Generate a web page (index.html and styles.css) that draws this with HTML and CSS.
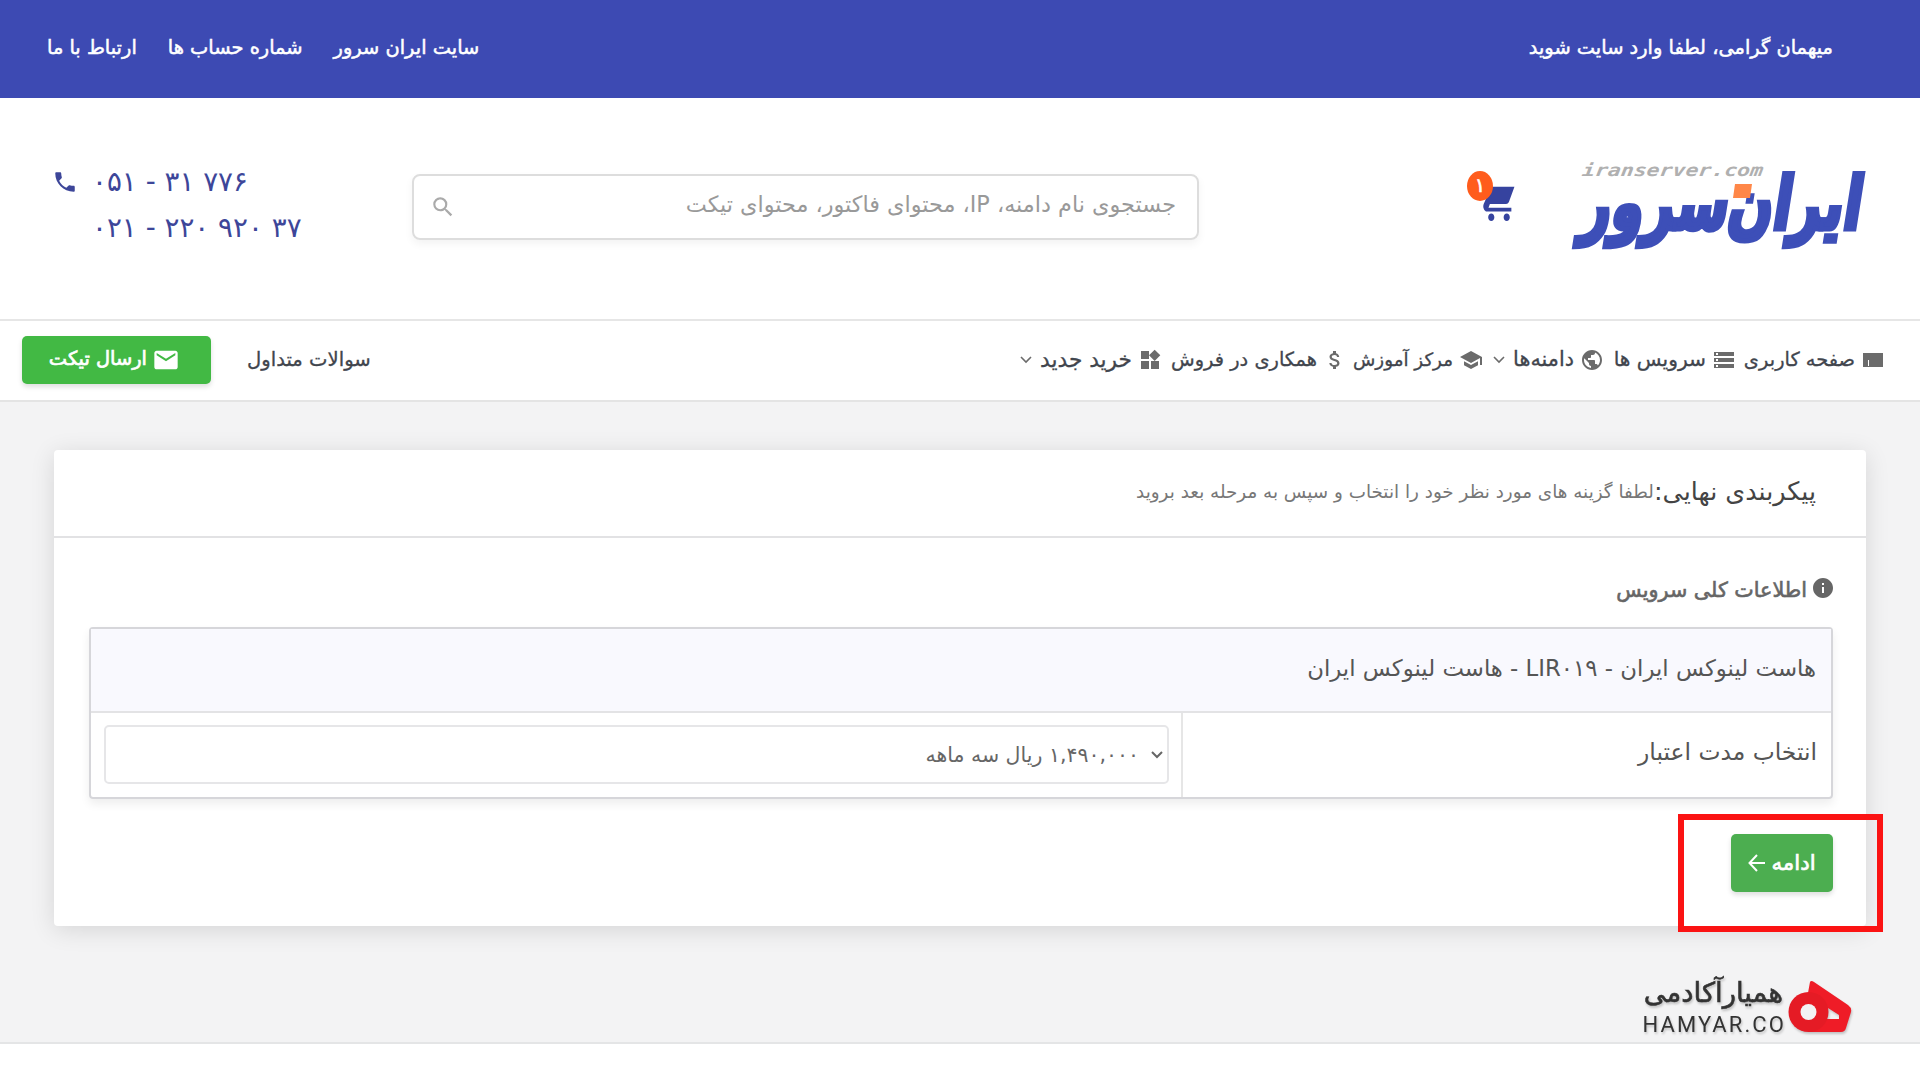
FILE: index.html
```
<!DOCTYPE html>
<html lang="fa" dir="rtl">
<head>
    <meta charset="UTF-8">
    <title>ایران سرور - پیکربندی نهایی</title>
    <link rel="stylesheet" href="styles.css">
</head>
<body>

<div class="topbar">
    <span>میهمان گرامی، لطفا وارد سایت شوید</span>
    <div class="topbar-links">
        <a>سایت ایران سرور</a>
        <a>شماره حساب ها</a>
        <a>ارتباط با ما</a>
    </div>
</div>

<header class="header">
    <svg class="logo" width="310" height="100" viewBox="-5 0 310 100" direction="ltr">
        <text class="logo-domain" x="14" y="18" textLength="181" lengthAdjust="spacingAndGlyphs" transform="skewX(-8)">iranserver.com</text>
        <g transform="translate(9 71) skewX(-9) scale(1 1.3)">
            <text class="logo-name" x="0" y="0" textLength="280" lengthAdjust="spacingAndGlyphs">ایران‌سرور</text>
        </g>
        <path class="logo-dot" d="M165 26h17l-2 14h-17z"/>
    </svg>
    <div class="cart">
        <svg width="34" height="38" viewBox="1 2 22 20" preserveAspectRatio="none"><path d="M17 18c1.100 0 2 .9 2 2s-.9 2-2 2-2-.9-2-2 .9-2 2-2zM7 18c1.100 0 2 .9 2 2s-.9 2-2 2-2-.9-2-2 .9-2 2-2zM22 4H6.200L3.300 10.800 2.100 13c-.8 1.500.2 4 2.200 4H20v-2H5.200l.9-2h10.500c.8 0 1.400-.4 1.800-1z"/></svg>
        <span class="badge">۱</span>
    </div>
    <div class="search">
        <input type="text" placeholder="جستجوی نام دامنه، IP، محتوای فاکتور، محتوای تیکت">
        <svg width="26" height="26" viewBox="0 0 24 24"><path d="M15.500 14h-.79l-.28-.27A6.470 6.470 0 0 0 16 9.500 6.500 6.500 0 1 0 9.500 16c1.610 0 3.090-.59 4.230-1.570l.27.28v.79l5 4.990L20.490 19l-4.990-5zm-6 0C7.010 14 5 11.990 5 9.500S7.010 5 9.500 5 14 7.010 14 9.500 11.990 14 9.500 14z"/></svg>
    </div>
    <div class="phones">
        <svg width="26" height="26" viewBox="0 0 24 24"><path d="M6.620 10.790c1.440 2.830 3.760 5.140 6.590 6.590l2.200-2.200c.27-.27.67-.36 1.020-.24 1.120.37 2.330.57 3.570.57.550 0 1 .45 1 1V20c0 .550-.45 1-1 1-9.390 0-17-7.610-17-17 0-.55.450-1 1-1h3.500c.550 0 1 .45 1 1 0 1.250.2 2.450.57 3.570.110.350.030.740-.25 1.020l-2.200 2.200z"/></svg>
        <div>
            <div class="phone-a"><bdo dir="ltr">۰۵۱ - ۳۱ ۷۷۶</bdo></div>
            <div class="phone-b"><bdo dir="ltr">۰۲۱ - ۲۲۰ ۹۲۰ ۳۷</bdo></div>
        </div>
    </div>
</header>

<nav class="nav">
    <a class="nav-item nav-panel">
        <svg width="24" height="24" viewBox="0 0 24 24"><path d="M2 5h20v14H2zM7 12v6h1v-6z" fill-rule="evenodd"/></svg>
        <span>صفحه کاربری</span>
    </a>
    <a class="nav-item nav-services">
        <svg width="24" height="24" viewBox="0 0 24 24"><path d="M2 20h20v-4H2v4zm2-3h2v2H4v-2zM2 4v4h20V4H2zm4 3H4V5h2v2zm-4 7h20v-4H2v4zm2-3h2v2H4v-2z"/></svg>
        <span>سرویس ها</span>
    </a>
    <a class="nav-item nav-domains">
        <svg width="24" height="24" viewBox="0 0 24 24"><path d="M12 2C6.480 2 2 6.480 2 12s4.480 10 10 10 10-4.480 10-10S17.520 2 12 2zm-1 17.930c-3.950-.49-7-3.850-7-7.930 0-.62.080-1.210.21-1.790L9 15v1c0 1.100.9 2 2 2v1.930zm6.900-2.540c-.26-.81-1-1.390-1.900-1.390h-1v-3c0-.55-.45-1-1-1H8v-2h2c.550 0 1-.45 1-1V7h2c1.100 0 2-.9 2-2v-.41c2.930 1.190 5 4.060 5 7.410 0 2.080-.8 3.970-2.100 5.390z"/></svg>
        <span>دامنه‌ها</span>
        <svg class="arrow" width="12" height="8" viewBox="0 0 12 8"><path d="M1 1l5 5 5-5"/></svg>
    </a>
    <a class="nav-item nav-learn">
        <svg width="24" height="24" viewBox="0 0 24 24"><path d="M5 13.180v4L12 21l7-3.820v-4L12 17l-7-3.820zM12 3L1 9l11 6 9-4.910V17h2V9L12 3z"/></svg>
        <span>مرکز آموزش</span>
    </a>
    <a class="nav-item nav-sales">
        <svg width="24" height="24" viewBox="0 0 24 24"><path d="M11.800 10.900c-2.270-.59-3-1.200-3-2.150 0-1.090 1.010-1.850 2.700-1.850 1.780 0 2.440.85 2.500 2.100h2.210c-.07-1.720-1.120-3.300-3.210-3.810V3h-3v2.160c-1.940.42-3.500 1.680-3.500 3.610 0 2.310 1.910 3.460 4.700 4.130 2.500.6 3 1.480 3 2.410 0 .69-.49 1.790-2.700 1.790-2.060 0-2.870-.92-2.980-2.100h-2.200c.12 2.190 1.760 3.420 3.680 3.830V21h3v-2.150c1.950-.37 3.500-1.500 3.500-3.550 0-2.840-2.430-3.810-4.700-4.400z"/></svg>
        <span>همکاری در فروش</span>
    </a>
    <a class="nav-item nav-buy">
        <svg width="24" height="24" viewBox="0 0 24 24"><path d="M13 13v8h8v-8h-8zM3 21h8v-8H3v8zM3 3v8h8V3H3zm13.660-1.310L11 7.340 16.660 13l5.660-5.660-5.660-5.650z"/></svg>
        <span>خرید جدید</span>
        <svg class="arrow" width="12" height="8" viewBox="0 0 12 8"><path d="M1 1l5 5 5-5"/></svg>
    </a>
    <a class="nav-faq">سوالات متداول</a>
    <a class="btn btn-ticket">
        <svg width="28" height="28" viewBox="0 0 24 24"><path d="M20 4H4c-1.100 0-1.990.9-1.990 2L2 18c0 1.100.9 2 2 2h16c1.100 0 2-.9 2-2V6c0-1.100-.9-2-2-2zm0 4l-8 5-8-5V6l8 5 8-5v2z"/></svg>
        <span>ارسال تیکت</span>
    </a>
</nav>

<main class="main">
    <section class="card">
        <div class="card-head">
            <h1>پیکربندی نهایی:</h1>
            <small>لطفا گزینه های مورد نظر خود را انتخاب و سپس به مرحله بعد بروید</small>
        </div>
        <div class="card-body">
            <h2 class="info-title">
                <svg width="24" height="24" viewBox="0 0 24 24"><path d="M12 2C6.480 2 2 6.480 2 12s4.480 10 10 10 10-4.480 10-10S17.520 2 12 2zm1 15h-2v-6h2v6zm0-8h-2V7h2v2z"/></svg>
                <span>اطلاعات کلی سرویس</span>
            </h2>
            <div class="config">
                <div class="config-name">هاست لینوکس ایران - LIR۰۱۹ - هاست لینوکس ایران</div>
                <div class="config-row">
                    <div class="config-label">انتخاب مدت اعتبار</div>
                    <div class="config-value">
                        <div class="select">
                            <svg class="arrow" width="12" height="8" viewBox="0 0 12 8"><path d="M1 1l5 5 5-5"/></svg>
                            <span><bdo dir="ltr">۱,۴۹۰,۰۰۰</bdo> ریال سه ماهه</span>
                        </div>
                    </div>
                </div>
            </div>
            <div class="actions">
                <a class="btn btn-next">
                    <span>ادامه</span>
                    <svg width="18" height="18" viewBox="0 0 18 18"><path d="M17 9H2M9 1L1.500 9 9 17"/></svg>
                </a>
                <div class="highlight"></div>
            </div>
        </div>
    </section>

    <div class="hamyar">
        <svg width="64" height="54" viewBox="0 0 64 54">
            <path class="hamyar-wing" fill-rule="evenodd" d="M22 2q1-2 4 0L60 25q4 3 3 7l-5 16q-1 4-5 4H20V13zM40 28l-2 11h13v-4z"/>
            <circle class="hamyar-ring" cx="20.500" cy="32" r="20"/>
            <circle class="hamyar-hole" cx="20.500" cy="32" r="8"/>
        </svg>
        <div class="hamyar-text">
            <div class="hamyar-fa">همیارآکادمی</div>
            <div class="hamyar-en">HAMYAR.CO</div>
        </div>
    </div>
</main>

</body>
</html>
```
FILE: styles.css
```
* { box-sizing: border-box; }
body { margin: 0; font-family: "DejaVu Sans", sans-serif; font-size: 19.4px; color: #444; background: #fff; overflow: hidden; }
svg { flex: none; fill: currentColor; }
span, a, h1, h2, small { white-space: nowrap; }
.arrow { fill: none; stroke: currentColor; stroke-width: 1.6; }

.topbar { display: flex; justify-content: space-between; height: 98px; padding: 0 87px 4px 47px; align-items: center; background: #3d4ab3; color: #fff; font-size: 19.400px; -webkit-text-stroke: .5px #fff; }
.topbar-links { display: flex; gap: 31px; }

.header { display: flex; height: 223px; border-bottom: 2px solid #e6e6e6; }
.logo { margin: 60px 45px 0 0; overflow: visible; }
.logo-domain { font: italic bold 17px "DejaVu Sans Mono", monospace; fill: #b0b0b0; }
.logo-name { font: bold 56px "DejaVu Sans", sans-serif; fill: #3d4fb8; stroke: #3d4fb8; stroke-width: 4; }
.logo-dot { fill: #ff8748; }
.cart { position: relative; width: 50px; height: 50px; margin: 72px 45px 0 0; color: #36439f; padding: 13px 4px 0 0; }
.badge { position: absolute; left: -3px; top: 1px; width: 26px; height: 30px; border-radius: 50%; background: #ff5c1c; color: #fff; text-align: center; line-height: 29px; -webkit-text-stroke: .6px #fff; }
.search { display: flex; align-items: center; width: 787px; height: 66px; margin: 76px 271px 0 0; padding: 0 21px 0 16px; border: 2px solid #ddd; border-radius: 8px; box-shadow: 0 4px 8px rgba(0,0,0,.05); color: #aaa; }
.search input { flex: 1; border: none; outline: none; padding: 0 0 6px; height: 58px; background: none; font: 22.350px "DejaVu Sans", sans-serif; }
.search input::placeholder { color: #999; }
.phones { display: flex; direction: ltr; width: 270px; margin: 60px auto 0 0; padding-left: 52px; gap: 14px; color: #3d4699; }
.phones svg { margin-top: 11px; }
.phones div div { height: 46px; line-height: 47px; white-space: nowrap; }
.phone-a, .phone-b { font-size: 27.800px; }

.nav { display: flex; height: 81px; padding: 0 35px 1px 22px; align-items: center; border-bottom: 2px solid #e4e4e4; color: #41454d; -webkit-text-stroke: .3px currentColor; }
.nav-item { display: flex; align-items: center; gap: 6px; }
.nav-item svg { color: #6b6b6b; -webkit-text-stroke: 0; }
.nav-item span, .nav-faq { padding-bottom: 2px; }
.nav-item .arrow { margin-right: 2px; }
.nav-panel { width: 149px; }
.nav-services { width: 132px; font-size: 20.200px; }
.nav-domains { width: 121px; font-size: 20.800px; }
.nav-learn { width: 136px; font-size: 18.300px; }
.nav-sales { width: 185px; }
.nav-buy { width: 146px; font-size: 21.700px; }
.nav-faq { margin-right: auto; margin-left: 36px; font-size: 19.600px; }

.btn { display: flex; align-items: center; border-radius: 5px; color: #fff; box-shadow: 0 3px 5px rgba(0,0,0,.13); -webkit-text-stroke: .7px #fff; }
.btn-ticket { width: 189px; height: 48px; padding-right: 31px; gap: 5px; background: #42b944; }
.btn-ticket span { padding-bottom: 3px; }

.main { height: 642px; padding: 48px 54px 0; background: #f3f3f4; border-bottom: 2px solid #e4e5e6; }
.card { height: 476px; background: #fff; border-radius: 4px; box-shadow: 0 4px 24px rgba(0,0,0,.12); }
.card-head { display: flex; height: 88px; align-items: center; padding: 0 50px 3px 0; border-bottom: 2px solid #e2e2e4; }
.card-head h1 { margin: 0; padding-bottom: 2px; font-size: 25.400px; font-weight: normal; color: #444; }
.card-head small { font-size: 18.350px; color: #777; }
.card-body { padding: 35px 33px 0 35px; }
.info-title { display: flex; align-items: center; gap: 4px; height: 34px; margin: 0 -2px 20px 0; font-size: 20.700px; font-weight: normal; color: #666; -webkit-text-stroke: .6px #666; }
.info-title svg { -webkit-text-stroke: 0; margin-bottom: 4px; }
.config { height: 172px; border: 2px solid #d6d6da; border-radius: 4px; color: #555; box-shadow: 0 5px 10px rgba(0,0,0,.07); }
.config-name { height: 84px; line-height: 79px; padding-right: 15px; background: #f9f9fe; border-bottom: 2px solid #e3e3e5; font-size: 22.800px; }
.config-row { display: flex; height: 84px; }
.config-label { width: 650px; padding-right: 14px; line-height: 78px; font-size: 23.400px; border-left: 2px solid #e6e6e6; }
.config-value { flex: 1; padding: 12px 12px 12px 13px; }
.select { display: flex; align-items: center; gap: 12px; height: 59px; padding-right: 4px; border: 2px solid #e6e6e8; border-radius: 5px; font-size: 20.500px; color: #666; }
.select .arrow { stroke-width: 2; }
.actions { position: relative; padding-top: 35px; }
.btn-next { width: 102px; height: 58px; justify-content: center; gap: 5px; background: #4cae50; font-size: 21.300px; }
.btn-next span { padding-bottom: 1px; }
.btn-next svg { fill: none; stroke: #fff; stroke-width: 2; }
.highlight { position: absolute; right: -50px; top: 15px; width: 205px; height: 118px; border: 6px solid #fb1313; }

.hamyar { display: flex; margin: 54px 14px 0 0; gap: 5px; filter: drop-shadow(1px 2px 1px rgba(0,0,0,.2)); }
.hamyar-wing { fill: #ef1c27; }
.hamyar-ring { fill: #e51b25; }
.hamyar-hole { fill: #f3f3f4; }
.hamyar-text { direction: ltr; text-align: right; color: #333; }
.hamyar-fa { height: 33px; line-height: 24px; font-size: 27.500px; -webkit-text-stroke: .6px #333; }
.hamyar-en { font: 22px/24px Roboto, sans-serif; letter-spacing: 2.100px; margin-right: -3px; }
```
